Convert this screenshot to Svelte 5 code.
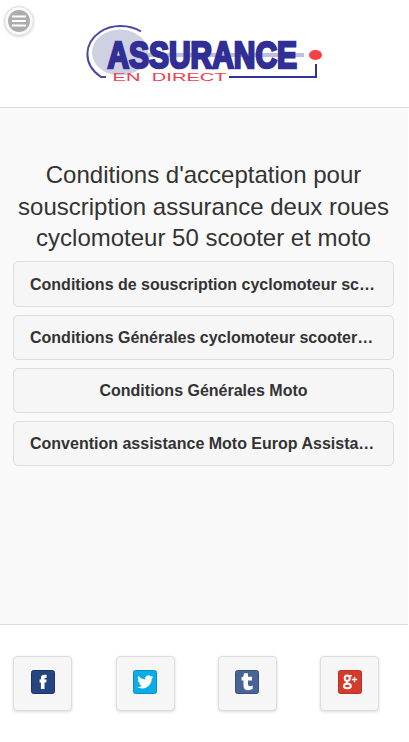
<script>
  const links = [
    'Conditions de souscription cyclomoteur scooter 50',
    'Conditions Générales cyclomoteur scooter 50',
    'Conditions Générales Moto',
    'Convention assistance Moto Europ Assistance',
  ];
  const networks = [
    { name: 'Facebook', color: '#24457f', edge: '#1b3566' },
    { name: 'Twitter', color: '#0cace9', edge: '#0a8fc4' },
    { name: 'Tumblr', color: '#486496', edge: '#38507c' },
    { name: 'Google Plus', color: '#d33c2c', edge: '#b83226' },
  ];
</script>

<div class="page">
  <header>
    <button class="menu" aria-label="Menu">
      <svg width="22" height="22" viewBox="0 0 22 22">
        <circle cx="11" cy="11" r="11" fill="#adadad" />
        <path d="M4 6.500H18M4 11H18M4 15.500H18" stroke="#fff" stroke-width="2.2" />
      </svg>
    </button>
    <svg class="logo" width="246" height="72" viewBox="80 15 246 72">
      <ellipse cx="120" cy="52.5" rx="28" ry="23" fill="#ced1e2" />
      <path d="M145 55H304" stroke="#bcbfe0" stroke-width="4" />
      <path d="M141 31.5C130 24.5 112 23.500 100 32C84 43 82 64 101 77H106" fill="none" stroke="#4b48a3" stroke-width="2" />
      <text x="107.500" y="68.300" class="brand" textLength="189.500" lengthAdjust="spacingAndGlyphs">ASSURANCE</text>
      <text x="112.500" y="80.800" class="direct" textLength="114" lengthAdjust="spacingAndGlyphs">EN DIRECT</text>
      <path d="M229 77H316V64" fill="none" stroke="#34319a" stroke-width="2" />
      <ellipse cx="315.500" cy="55" rx="6.500" ry="5" fill="#fb3f48" />
    </svg>
  </header>

  <main>
    <h1>Conditions d'acceptation pour souscription assurance deux roues cyclomoteur 50 scooter et moto</h1>
    <nav>
      {#each links as link}
        <a href="#top">{link}</a>
      {/each}
    </nav>
  </main>

  <footer>
    {#each networks as network, i}
      <a class="social" href="#top" aria-label={network.name}>
        <svg width="24" height="24" viewBox="0 0 24 24">
          <rect x=".5" y=".5" width="23" height="23" rx="2" fill={network.color} stroke={network.edge} />
          {#if i === 0}
            <path fill="#fff" d="M9.900 19V12.500H8.600V9.500H9.900V8.200C9.900 5.900 11.100 4.800 13.200 4.800H15.600V8H14.400C13.700 8 13.500 8.200 13.500 8.700V9.500H15.600L15.200 12.500H13.500V19Z" />
          {:else if i === 1}
            <path fill="#fff" transform="translate(4.200 3.900) scale(.67)" d="M23.950 4.570a10 10 0 0 1-2.820.770 4.960 4.960 0 0 0 2.160-2.720c-.950.550-2 .950-3.130 1.180a4.920 4.920 0 0 0-8.380 4.480C7.690 8.100 4.070 6.130 1.640 3.160a4.820 4.820 0 0 0-.670 2.480c0 1.710.870 3.210 2.190 4.100a4.900 4.900 0 0 1-2.230-.620v.060a4.920 4.920 0 0 0 3.950 4.830 5 5 0 0 1-2.210.080 4.940 4.940 0 0 0 4.600 3.420A9.870 9.870 0 0 1 0 19.540a14 14 0 0 0 7.550 2.210c9.050 0 14-7.500 14-13.980 0-.210 0-.420-.020-.630a9.940 9.940 0 0 0 2.420-2.570z" />
          {:else if i === 2}
            <path fill="#fff" d="M9 3.200H13V6.800H17V10.500H13V14.300C13 16.500 15 16.500 17.700 15.500V19C13 21.300 8.500 20 8.500 15.900V10.500H6.500V7.500C8.300 7 8.900 6 9 3.200Z" />
          {:else}
            <g fill="none" stroke="#fff">
              <ellipse cx="9.200" cy="8.300" rx="2.500" ry="2.700" stroke-width="2" />
              <path d="M9.500 5.700H13.800M10 11C7.500 12 8 12.900 10.500 13.600" stroke-width="1.600" />
              <ellipse cx="9.400" cy="16" rx="3.400" ry="2.300" stroke-width="2" />
              <path d="M13.800 9.500H19.200M16.500 6.800V12.200" stroke-width="1.300" />
            </g>
          {/if}
        </svg>
      </a>
    {/each}
  </footer>
</div>

<style>
  .page {
    box-sizing: border-box;
    width: 409px;
    height: 742px;
    display: flex;
    flex-direction: column;
    background: #fff;
    color: #333;
    font-family: "Liberation Sans", Arial, sans-serif;
    overflow: hidden;
  }
  header {
    position: relative;
    box-sizing: border-box;
    flex: 0 0 108px;
    padding: 15px 0 0 80px;
    border-bottom: 1px solid #ddd;
  }
  .logo { display: block; overflow: visible; }
  .brand { font: 900 37px "Liberation Sans", Arial, sans-serif; fill: #312e96; stroke: #312e96; stroke-width: 2.600px; }
  .direct { font: 10.200px "Liberation Sans", Arial, sans-serif; fill: #ee4050; word-spacing: 3px; }
  .menu {
    position: absolute;
    left: 4px;
    top: 6px;
    display: grid;
    place-items: center;
    width: 30px;
    height: 30px;
    padding: 0;
    border: 1px solid #ddd;
    border-radius: 50%;
    background: #fafafa;
    box-shadow: 0 1px 3px rgba(0, 0, 0, .15);
  }
  main {
    box-sizing: border-box;
    flex: 0 0 516px;
    width: 408px;
    padding: 51px 14px 0 13px;
    background: #f9f9f9;
  }
  h1 {
    margin: 0 -4px;
    font-size: 24px;
    font-weight: 400;
    line-height: 31.500px;
    text-align: center;
  }
  nav {
    display: flex;
    flex-direction: column;
    gap: 7.800px;
    margin-top: 7.900px;
  }
  nav a {
    box-sizing: border-box;
    height: 45.400px;
    padding: 0 16px;
    border: 1px solid #ddd;
    border-radius: 5px;
    background: #f6f6f6;
    color: #333;
    font-size: 16px;
    font-weight: 700;
    line-height: 44.600px;
    text-align: center;
    text-decoration: none;
    white-space: nowrap;
    overflow: hidden;
    text-overflow: ellipsis;
  }
  nav a:first-child { line-height: 46px; }
  footer {
    box-sizing: border-box;
    flex: 1;
    display: grid;
    grid-template-columns: 103px 102px 102px 59px;
    width: 408px;
    padding: 31px 0 0 13px;
    border-top: 1px solid #ddd;
  }
  .social {
    box-sizing: border-box;
    display: flex;
    justify-content: center;
    width: 59px;
    height: 55px;
    padding-top: 13px;
    border: 1px solid #ddd;
    border-radius: 4px;
    background: #f6f6f6;
    box-shadow: 0 1px 3px rgba(0, 0, 0, .15);
  }
  .social:nth-child(2) { padding-right: 2px; }
  .social:nth-child(3) { padding-right: 1px; }
</style>
